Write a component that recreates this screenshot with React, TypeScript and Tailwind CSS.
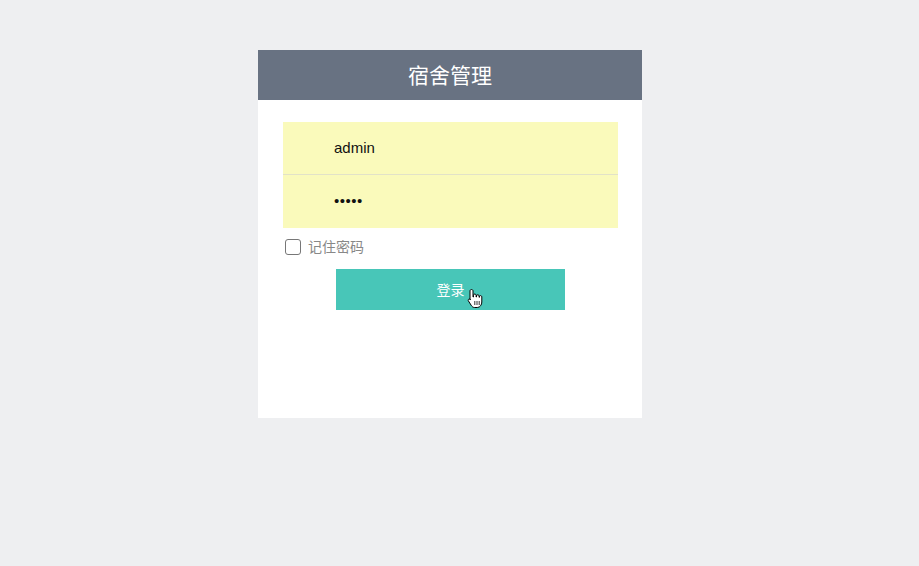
import React from "react";

const CJK = "font-['Microsoft_YaHei','Noto_Sans_CJK_SC',sans-serif]";

function HandCursor() {
  return (
    <svg width="16" height="21" viewBox="0 0 16 21" className="absolute left-[131px] top-[19px]">
      <path
        d="M4.5 1.5c.8 0 1.5.6 1.5 1.4V9h.5V7.3c0-.8.6-1.3 1.3-1.3s1.3.5 1.3 1.3V9h.4V8c0-.8.6-1.3 1.3-1.3s1.3.5 1.3 1.3v1.3h.3v-.5c0-.7.6-1.2 1.2-1.2s1.2.5 1.2 1.2V14c0 2.5-1.6 5.5-4.5 5.5H7.5c-1.6 0-2.5-1-3.3-2.2L1.4 12.9c-.4-.7-.2-1.4.4-1.7.6-.4 1.3-.2 1.7.4L3 12V2.9c0-.8.7-1.4 1.5-1.4z"
        fill="#fff"
        stroke="#000"
        strokeWidth="1"
      />
      <path d="M7.8 13v4M10 13v4M12.2 13v4" stroke="#000" strokeWidth="0.8" />
    </svg>
  );
}

export default function App() {
  return (
    <div className="min-h-[566px] w-full bg-[#eeeff1] pt-[50px]">
      <div className="ml-[258px] w-[384px] bg-white pb-[108px]">
        <div className={`flex h-[50px] items-center justify-center bg-[#687282] text-[21px] text-white ${CJK}`}>
          宿舍管理
        </div>
        <div className="pl-[25px] pt-[22px]">
          <div className="w-[335px] bg-[#fafabb]">
            <div className="flex h-[53px] items-center border-b border-[#e2e2c8] pl-[51px] font-['Liberation_Sans',Arial,sans-serif] text-[15px] text-[#111]">
              admin
            </div>
            <div className="flex h-[53px] items-center pl-[51px] font-['Liberation_Sans',Arial,sans-serif] text-[15px] tracking-[0.5px] text-[#111]">
              •••••
            </div>
          </div>
          <label className={`mt-[10px] flex h-[17px] items-center gap-[7px] pl-[2px] text-[14px] text-[#888] ${CJK}`}>
            <span className="block h-[16px] w-[16px] rounded-[3px] border border-[#777] bg-white" />
            记住密码
          </label>
          <div className="mt-[14px] flex w-[335px] justify-center">
            <button className={`relative h-[41px] w-[229px] bg-[#48c6b8] text-[14px] text-white ${CJK}`}>
              登录
              <HandCursor />
            </button>
          </div>
        </div>
      </div>
    </div>
  );
}
